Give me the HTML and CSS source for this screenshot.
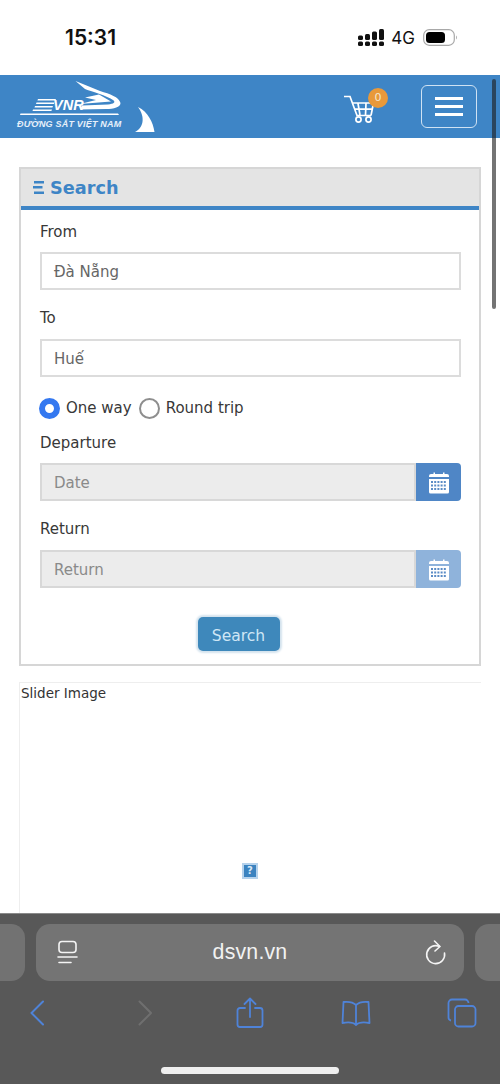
FILE: index.html
```html
<!DOCTYPE html>
<html lang="vi">
<head>
<meta charset="utf-8">
<title>Search</title>
<link rel="stylesheet" href="styles.css">
</head>
<body>
<div class="status">
  <span class="time">15:31</span>
  <div class="status-right">
    <svg class="signal" width="26" height="18" viewBox="0 0 26 18">
      <g fill="#111">
        <rect x="0" y="6.500" width="5" height="4.500" rx="1.500"/><rect x="0" y="12.500" width="5" height="4.500" rx="1.500"/>
        <rect x="7" y="5" width="5" height="6" rx="1.500"/><rect x="7" y="12.500" width="5" height="4.500" rx="1.500"/>
        <rect x="14" y="2.500" width="5" height="8.500" rx="1.500"/><rect x="14" y="12.500" width="5" height="4.500" rx="1.500"/>
        <rect x="21" y="0" width="5" height="11" rx="1.500"/><rect x="21" y="12.500" width="5" height="4.500" rx="1.500"/>
      </g>
    </svg>
    <span class="net">4G</span>
    <svg class="battery" width="35" height="17" viewBox="0 0 35 17">
      <rect x="0.700" y="0.700" width="30.600" height="15.600" rx="5.500" fill="#fff" stroke="#a8a8a8" stroke-width="1.200"/>
      <rect x="3" y="3" width="19" height="11" rx="3.500" fill="#000"/>
      <path d="M33 6.500c1 .4 1 3.600 0 4z" fill="#999"/>
    </svg>
  </div>
</div>

<header class="site-header">
  <svg class="logo" width="160" height="63" viewBox="0 75 160 63">
    <g fill="#fff">
      <path d="M75.500 81 L100 91 C110 94 119 97 120.500 103 C120.500 107 114 109 106 109 L80 109.500 L82 105.500 L108 104.500 C114 104 116 102 113 100 C108 96 90 91 85 89 Z"/>
      <path d="M85 97.500 L99 94.500 L111 101.500 L80 104 L96 100 Z"/>
      <path d="M38 99h18l-.6 1.500H37.400zM36.500 102.500h18l-.6 1.500H36zM35 106h18l-.6 1.500H34.500zM33 109.500h19l-.6 1.500H32.500z"/>
      <path d="M20.500 113.500 H118 L119 115 H20 Z"/>
      <path d="M138 107 C148 112 153 122 154.500 132 L135 132 C143 128 146 118 138 107Z"/>
    </g>
    <text class="logo-vnr" x="53" y="110">VNR</text>
    <text class="logo-name" x="17" y="127">ĐƯỜNG SẮT VIỆT NAM</text>
  </svg>
  <div class="header-actions">
    <div class="cart">
      <svg width="34" height="30" viewBox="0 0 34 30" fill="none" stroke="#fff" stroke-width="1.700">
        <path d="M1 2.500H7L14 21.500H28"/>
        <path d="M9 9H30.500L28 21.500M11.200 15.200H29.300M15 9.500L17 21M23 9.500L22.500 21"/>
        <circle cx="15.500" cy="25.500" r="2.600"/><circle cx="25.500" cy="25.500" r="2.600"/>
      </svg>
      <span class="badge">0</span>
    </div>
    <button class="menu-btn" aria-label="Menu"><span></span><span></span><span></span></button>
  </div>
</header>

<main class="page">
  <section class="card">
    <h2 class="card-title">
      <svg width="11" height="13" viewBox="0 0 11 13" fill="#3d85c6"><path d="M1 0h10v2.600H1zM0 5h9.500v2.600H0zM1 10.400h10V13H1z"/></svg>
      <span>Search</span>
    </h2>
    <form class="form">
      <label class="label first">From</label>
      <div class="input">Đà Nẵng</div>
      <label class="label">To</label>
      <div class="input">Huế</div>
      <div class="radios">
        <span class="radio on"></span><span class="radio-text">One way</span>
        <span class="radio"></span><span class="radio-text">Round trip</span>
      </div>
      <label class="label dep">Departure</label>
      <div class="date">
        <div class="input disabled">Date</div>
        <span class="cal">
          <svg width="22" height="23" viewBox="0 0 22 23"><use href="#cal-icon"/></svg>
        </span>
      </div>
      <label class="label">Return</label>
      <div class="date">
        <div class="input disabled">Return</div>
        <span class="cal faded">
          <svg width="22" height="23" viewBox="0 0 22 23"><use href="#cal-icon"/></svg>
        </span>
      </div>
      <div class="submit-row"><button type="button" class="submit">Search</button></div>
    </form>
  </section>

  <section class="slider">
    <span class="slider-alt">Slider Image</span>
    <span class="broken">?</span>
  </section>
</main>

<footer class="safari">
  <div class="url-row">
    <div class="tab-peek left"></div>
    <div class="url-bar">
      <svg width="22" height="26" viewBox="0 0 22 26" fill="none" stroke="#f4f4f4" stroke-width="1.600" stroke-linecap="round">
        <rect x="2" y="1.500" width="17" height="11" rx="3"/><path d="M1 17h19M2 22.500h12"/>
      </svg>
      <span class="url">dsvn.vn</span>
      <svg width="22" height="26" viewBox="0 0 22 26" fill="none" stroke="#f4f4f4" stroke-width="1.600" stroke-linecap="round" stroke-linejoin="round">
        <path d="M14.500 6.500A9 9 0 1 0 19.500 13"/><path d="M9.500 1l5.500 5.500-5 4.500"/>
      </svg>
    </div>
    <div class="tab-peek right"></div>
  </div>
  <nav class="tools">
    <svg width="18" height="28" viewBox="0 0 18 28" fill="none" stroke="#4f83d8" stroke-width="2" stroke-linecap="round" stroke-linejoin="round"><path d="M14 2.500L2.500 14 14 25.500"/></svg>
    <svg width="18" height="28" viewBox="0 0 18 28" fill="none" stroke="#6f6f6f" stroke-width="2" stroke-linecap="round" stroke-linejoin="round"><path d="M4.500 2.500L16 14 4.500 25.500"/></svg>
    <svg width="28" height="32" viewBox="0 0 28 32" fill="none" stroke="#4f83d8" stroke-width="1.800" stroke-linecap="round" stroke-linejoin="round"><path d="M9 11H4a2.500 2.500 0 0 0-2.500 2.500v14A2.500 2.500 0 0 0 4 30h20a2.500 2.500 0 0 0 2.500-2.500v-14A2.500 2.500 0 0 0 24 11h-5M14 20V1.500M8.500 7L14 1.500 19.500 7"/></svg>
    <svg width="32" height="26" viewBox="0 0 32 26" fill="none" stroke="#4f83d8" stroke-width="1.800" stroke-linecap="round" stroke-linejoin="round"><path d="M16 5C13 2 8 1.500 3.500 2L2.500 23C8 22 13 22 16 25 19 22 24 22 29.500 23L28.500 2C24 1.500 19 2 16 5ZM16 5V25"/></svg>
    <svg width="30" height="30" viewBox="0 0 30 30" fill="none" stroke="#4f83d8" stroke-width="1.800" stroke-linejoin="round"><path d="M4 22.500A3 3 0 0 1 1.500 19.500V5A3.500 3.500 0 0 1 5 1.500h13A3.500 3.500 0 0 1 21.500 5"/><rect x="8" y="8" width="20.500" height="20.500" rx="3.500"/></svg>
  </nav>
  <div class="home-bar"></div>
</footer>

<div class="scrollbar"></div>

<svg class="defs" width="0" height="0">
  <defs>
    <g id="cal-icon">
      <path fill="#fff" d="M1 6V5a2 2 0 0 1 2-2h2.500V1.500h1.500V3h8V1.500h1.500V3H19a2 2 0 0 1 2 2v1z"/>
      <path fill="#fff" d="M1 8h20v13a1.500 1.500 0 0 1-1.500 1.500h-17A1.500 1.500 0 0 1 1 21z"/>
      <g fill="#5b8cc5">
        <rect x="3" y="10" width="2" height="2"/><rect x="6.200" y="10" width="2" height="2"/><rect x="9.400" y="10" width="2" height="2"/><rect x="12.600" y="10" width="2" height="2"/><rect x="15.800" y="10" width="2" height="2"/>
        <rect x="3" y="13.500" width="2" height="2"/><rect x="6.200" y="13.500" width="2" height="2"/><rect x="9.400" y="13.500" width="2" height="2"/><rect x="12.600" y="13.500" width="2" height="2"/><rect x="15.800" y="13.500" width="2" height="2"/>
        <rect x="3" y="17" width="2" height="2"/><rect x="6.200" y="17" width="2" height="2"/><rect x="9.400" y="17" width="2" height="2"/><rect x="12.600" y="17" width="2" height="2"/><rect x="15.800" y="17" width="2" height="2"/>
      </g>
    </g>
  </defs>
</svg>
</body>
</html>
```
FILE: styles.css
```css
* { box-sizing: border-box; }
html, body { margin: 0; padding: 0; }
body {
  width: 500px;
  height: 1084px;
  overflow: hidden;
  position: relative;
  display: flex;
  flex-direction: column;
  background: #fff;
  font-family: "DejaVu Sans", sans-serif;
  color: #333;
}

/* status bar */
.status {
  height: 75px;
  flex: none;
  display: flex;
  justify-content: space-between;
  align-items: flex-start;
  padding: 25px 42px 0 65px;
  font-family: Inter, "Liberation Sans", sans-serif;
  color: #111;
}
.time { font-size: 21px; font-weight: 600; line-height: 25px; }
.status-right { display: flex; align-items: center; height: 25px; gap: 8px; }
.net { font-size: 17px; font-weight: 400; }
.signal { margin-right: -1px; }

/* header */
.site-header {
  height: 63px;
  flex: none;
  background: #3e85c6;
  display: flex;
  justify-content: space-between;
  align-items: center;
  padding: 0 23px 0 0;
}
.logo { display: block; }
.logo-vnr { font: italic 700 14.500px "Liberation Sans", sans-serif; fill: #fff; }
.logo-name { font: italic 700 9px "Liberation Sans", sans-serif; fill: #e6f0fa; letter-spacing: .2px; }
.header-actions { display: flex; align-items: center; gap: 44px; }
.cart { position: relative; width: 34px; height: 30px; margin-top: 5px; }
.cart svg { display: block; }
.badge {
  position: absolute;
  top: -6px;
  left: 25px;
  width: 20px;
  height: 20px;
  border-radius: 50%;
  background: #e8993a;
  color: #f4e7d0;
  font: 11px/20px "DejaVu Sans", sans-serif;
  text-align: center;
}
.menu-btn {
  width: 56px;
  height: 43px;
  border: 1px solid #cfe2f3;
  border-radius: 6px;
  background: transparent;
  display: flex;
  flex-direction: column;
  justify-content: center;
  align-items: center;
  gap: 5.500px;
  padding: 0;
}
.menu-btn span { display: block; width: 28px; height: 2.500px; background: #fff; }

/* page */
.page { flex: 1; min-height: 0; padding: 29px 19px 0; overflow: hidden; }
.card { border: 2px solid #d6d6d6; height: 499px; }
.card-title {
  margin: 0;
  height: 41px;
  background: #e4e4e4;
  border-bottom: 4px solid #3e85c6;
  display: flex;
  align-items: center;
  gap: 6px;
  padding: 0 0 0 12px;
  font-size: 17.700px;
  font-weight: 700;
  color: #3e85c6;
}
.form { padding: 10px 18px 0 19px; display: flex; flex-direction: column; }
.label { font-size: 15px; line-height: 20px; margin-top: 18px; margin-bottom: 11px; color: #383838; display: block; }
.label.first { margin-top: 2px; margin-bottom: 10px; }
.label.dep { margin-top: 14px; margin-bottom: 10px; }
.input {
  height: 38px;
  border: 2px solid #dcdcdc;
  padding: 0 12px;
  font-size: 15px;
  line-height: 37px;
  color: #666;
  background: #fff;
  flex: 1;
  min-width: 0;
}
.form > .input { flex: none; }
.input.disabled { background: #ececec; color: #8a8a8a; border-color: #d8d8d8; }
.radios { display: flex; align-items: center; margin-top: 20px; margin-left: -1px; height: 22px; font-size: 15px; color: #383838; }
.radio {
  width: 21px;
  height: 21px;
  border-radius: 50%;
  border: 2px solid #8e8e8e;
  background: #fff;
  margin-right: 6px;
  flex: none;
}
.radio.on { border: 6px solid #3478f0; }
.radio-text { margin-right: 7px; margin-top: -1px; }
.date { display: flex; height: 38px; }
.cal {
  width: 45px;
  flex: none;
  background: #4f86c6;
  border-radius: 0 4px 4px 0;
  display: flex;
  align-items: center;
  justify-content: center;
}
.cal.faded { background: #8fb3db; }
.submit-row { display: flex; justify-content: center; margin-top: 29px; padding-right: 24px; }
.submit {
  width: 82px;
  height: 34px;
  border: 0;
  border-radius: 5px;
  background: #3e88bb;
  box-shadow: 0 0 2px 2px #d4e3ee;
  color: #cfe6f5;
  font: 15.500px "DejaVu Sans", sans-serif;
  padding: 4px 0 0;
}

/* slider */
.slider {
  position: relative;
  margin-top: 16px;
  height: 300px;
  border-top: 1px solid #eeeeee;
  border-left: 1px solid #eeeeee;
  font-size: 13.500px;
  line-height: 20px;
  padding-left: 1px;
}
.slider-alt { display: block; color: #333; }
.broken {
  position: absolute;
  left: 222px;
  top: 180px;
  width: 16px;
  height: 16px;
  background: #3b83c0;
  border: 2px solid #b5d2ec;
  color: #dbe9f6;
  font: 700 10px/12px "DejaVu Sans", sans-serif;
  text-align: center;
}

/* safari */
.safari {
  flex: none;
  height: 171px;
  background: #585858;
  border-top: 1px solid #8a8a8a;
  position: relative;
  overflow: hidden;
}
.url-row { display: flex; gap: 11px; margin: 10px -11px 0 -11px; justify-content: center; height: 57px; }
.tab-peek { width: 36px; flex: none; background: #727272; }
.tab-peek.left { border-radius: 0 14px 14px 0; }
.tab-peek.right { border-radius: 14px 0 0 14px; }
.url-bar {
  width: 428px;
  flex: none;
  background: #747474;
  border-radius: 14px;
  display: flex;
  align-items: center;
  justify-content: space-between;
  padding: 0 17px 0 21px;
}
.url {
  font: 400 21.300px "Liberation Sans", sans-serif;
  letter-spacing: .2px;
  color: #f2f2f2;
  padding-right: 4px;
}
.tools {
  display: grid;
  grid-template-columns: repeat(5, 106px);
  justify-items: center;
  align-items: center;
  margin: 15px 0 0 -15px;
  height: 34px;
}
.home-bar {
  position: absolute;
  left: 161px;
  bottom: 10px;
  width: 178px;
  height: 7px;
  border-radius: 4px;
  background: #efefef;
}
.scrollbar {
  position: absolute;
  top: 79px;
  left: 492px;
  width: 4px;
  height: 230px;
  border-radius: 2px;
  background: rgba(30, 30, 30, .62);
}
.defs { position: absolute; }
```
